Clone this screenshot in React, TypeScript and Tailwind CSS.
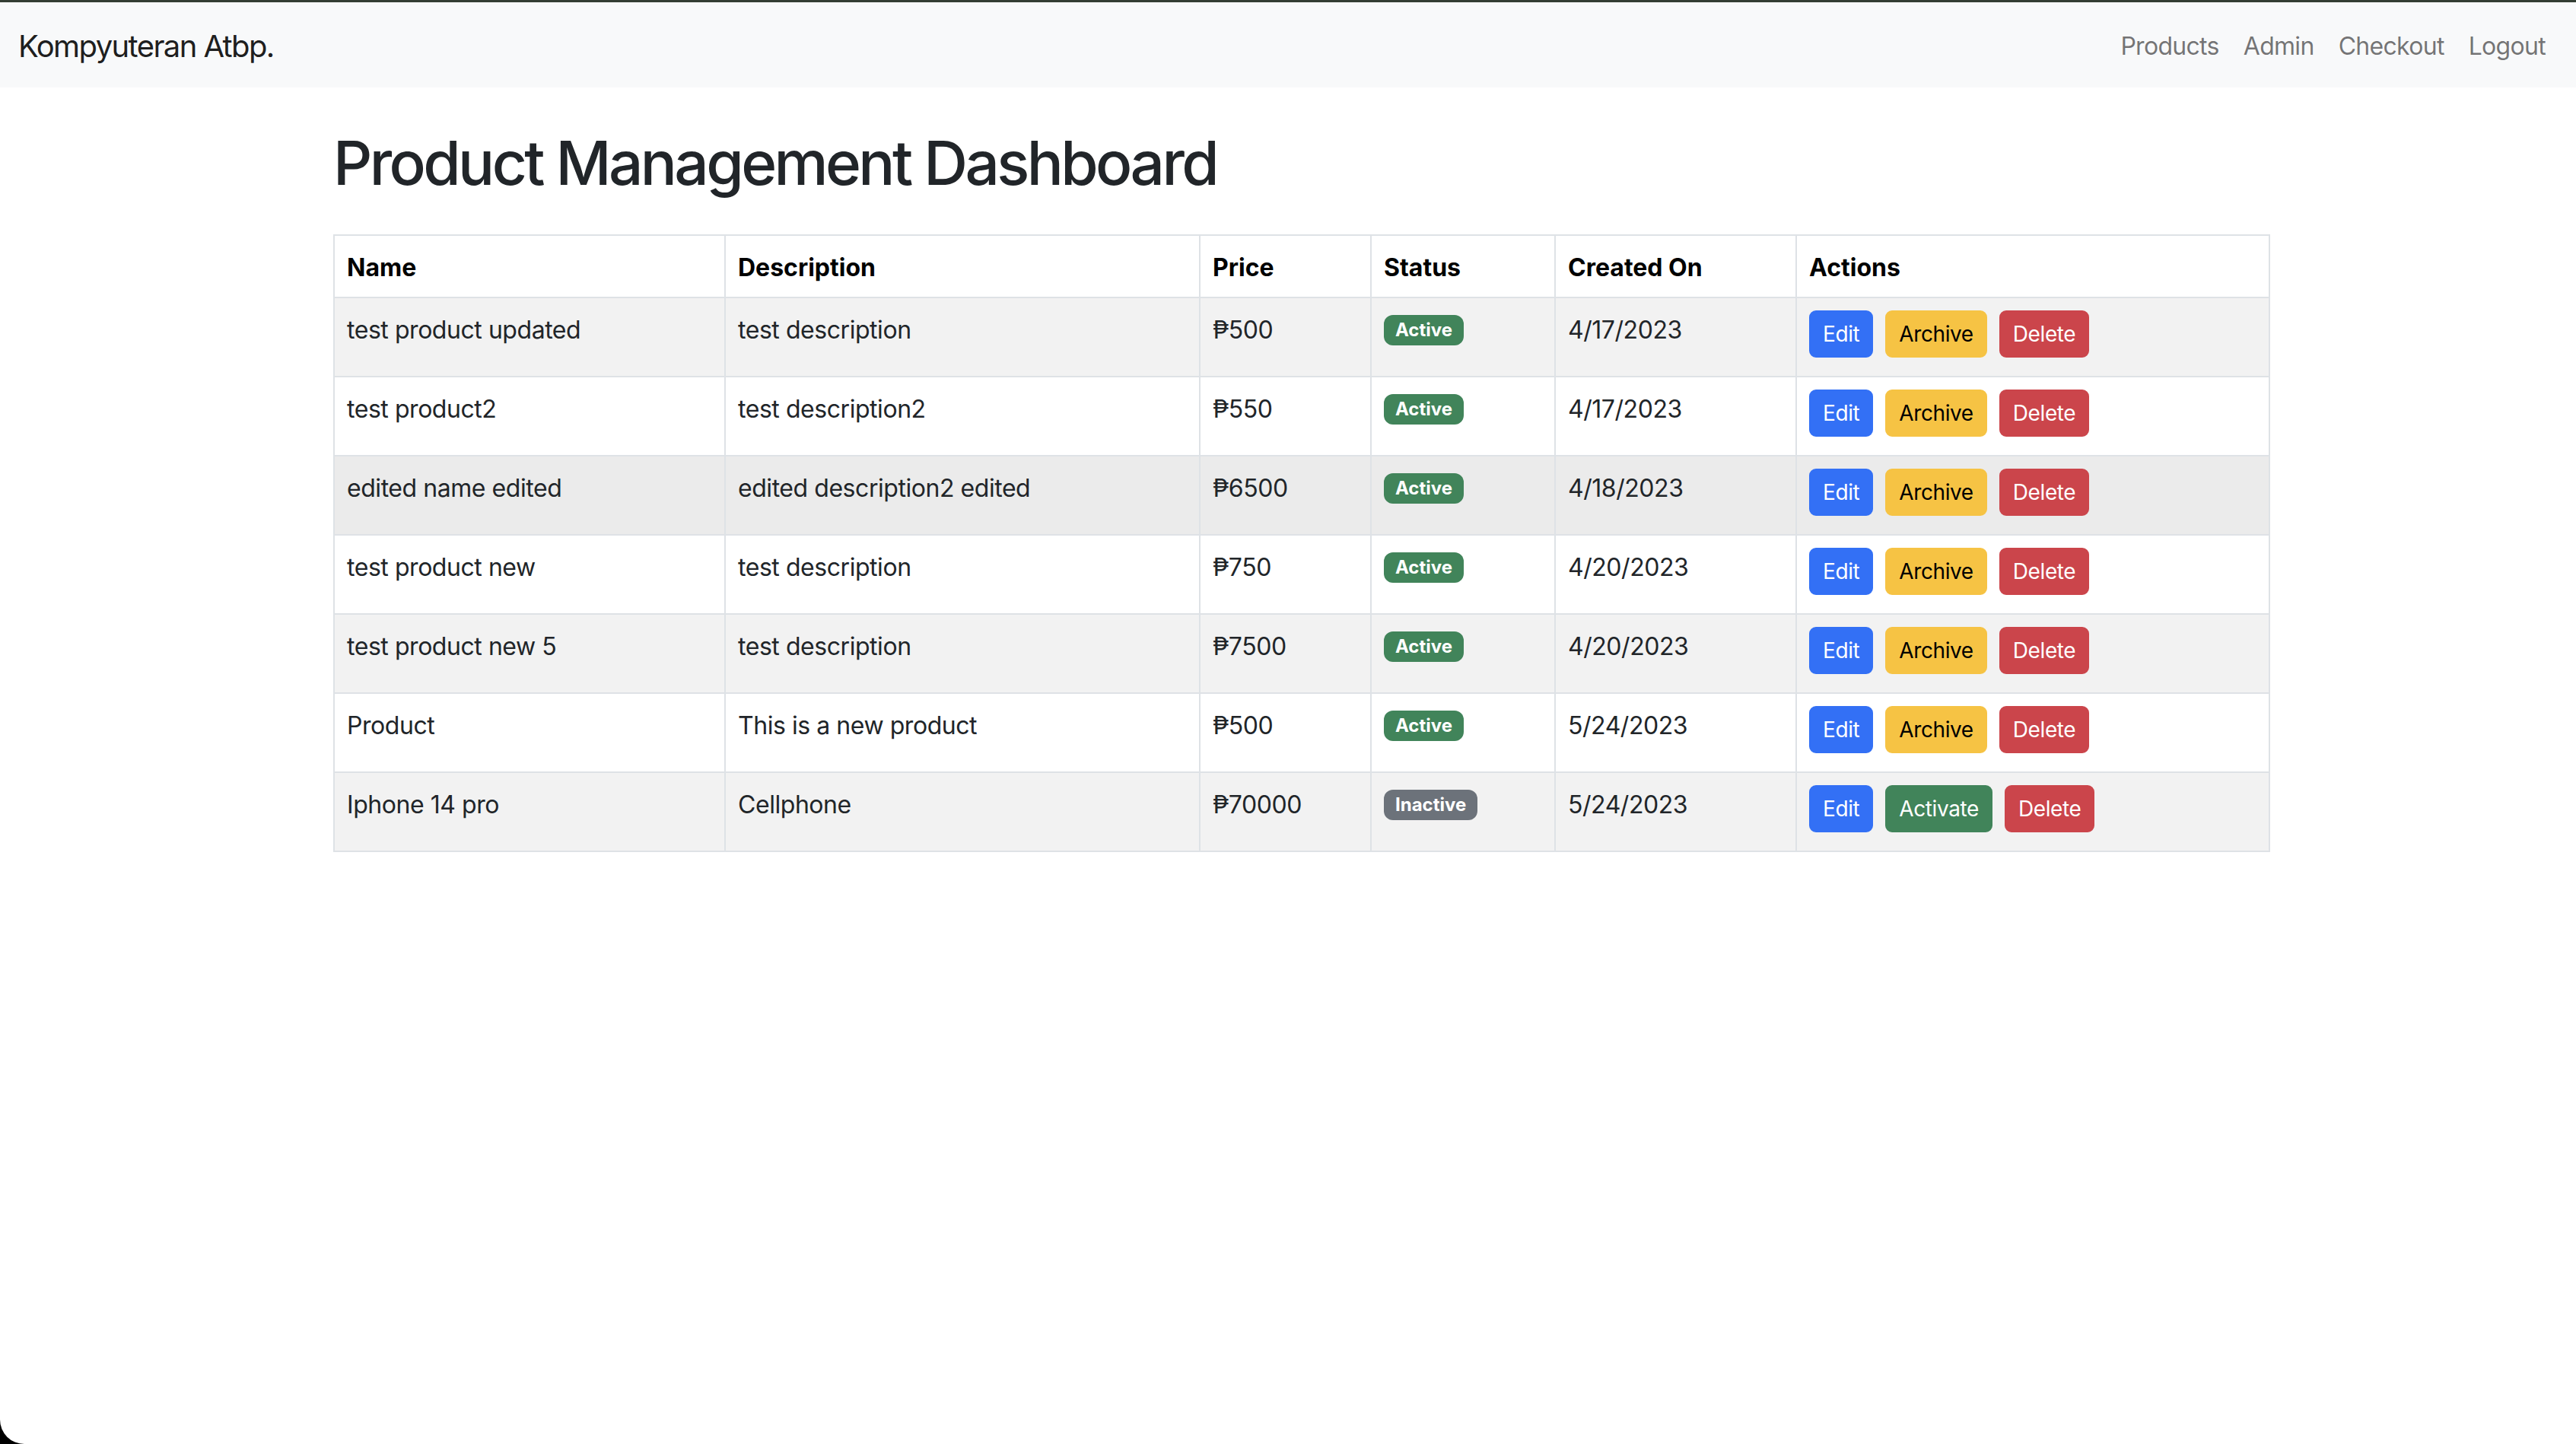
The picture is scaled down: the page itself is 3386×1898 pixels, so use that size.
import React from "react";

type Product = {
  name: string;
  description: string;
  price: string;
  active: boolean;
  created: string;
};

const products: Product[] = [
  { name: "test product updated", description: "test description", price: "₱500", active: true, created: "4/17/2023" },
  { name: "test product2", description: "test description2", price: "₱550", active: true, created: "4/17/2023" },
  { name: "edited name edited", description: "edited description2 edited", price: "₱6500", active: true, created: "4/18/2023" },
  { name: "test product new", description: "test description", price: "₱750", active: true, created: "4/20/2023" },
  { name: "test product new 5", description: "test description", price: "₱7500", active: true, created: "4/20/2023" },
  { name: "Product", description: "This is a new product", price: "₱500", active: true, created: "5/24/2023" },
  { name: "Iphone 14 pro", description: "Cellphone", price: "₱70000", active: false, created: "5/24/2023" },
];

const Btn = ({ label, className }: { label: string; className: string }) => (
  <button
    type="button"
    className={`h-[62px] px-[16px] border-2 rounded-[9px] text-[28px] leading-[42px] tracking-[-0.4px] ${className}`}
  >
    {label}
  </button>
);

const cell = "border-2 border-[#dee2e6] px-[16px] pt-[18px] pb-[14px] align-top";

export default function App() {
  return (
    <div
      className="relative w-[3386px] h-[1898px] bg-white overflow-hidden text-[#212529]"
      style={{ fontFamily: "Inter, 'Noto Sans', 'DejaVu Sans', sans-serif" }}
    >
      <div className="h-[3px] bg-[#333d33]" />

      <nav className="h-[112px] bg-[#f8f9fa] flex items-center justify-between px-[24px] pt-[4px]">
        <span className="text-[40px] leading-[60px] tracking-[-1.6px] text-black/90">Kompyuteran Atbp.</span>
        <div className="flex">
          {["Products", "Admin", "Checkout", "Logout"].map((l) => (
            <a key={l} href="#" className="px-[16px] text-[32px] leading-[48px] tracking-[-0.7px] text-black/55">
              {l}
            </a>
          ))}
        </div>
      </nav>

      <main className="ml-[438px] w-[2544px]">
        <h1 className="mt-[51px] text-[80px] leading-[96px] font-medium tracking-[-3.6px]">
          Product Management Dashboard
        </h1>

        <table className="mt-[46px] w-[2544px] border-collapse table-fixed text-[32px] leading-[48px]">
          <colgroup>
            <col className="w-[514px]" />
            <col className="w-[624px]" />
            <col className="w-[225px]" />
            <col className="w-[242px]" />
            <col className="w-[317px]" />
            <col className="w-[622px]" />
          </colgroup>
          <thead>
            <tr className="h-[82px]">
              {["Name", "Description", "Price", "Status", "Created On", "Actions"].map((h) => (
                <th key={h} className={`${cell} text-left font-bold text-black`}>
                  {h}
                </th>
              ))}
            </tr>
          </thead>
          <tbody className="tracking-[-0.45px]">
            {products.map((p, i) => (
              <tr
                key={i}
                className={`h-[104px] ${i === 2 ? "bg-[#ebebeb]" : i % 2 === 0 ? "bg-[#f2f2f2]" : "bg-white"}`}
              >
                <td className={cell}>{p.name}</td>
                <td className={cell}>{p.description}</td>
                <td className={cell}>{p.price}</td>
                <td className={cell}>
                  <div className="h-[48px] flex items-center">
                    <span
                      className={`px-[15px] py-[8px] rounded-[12px] text-[24px] leading-[24px] font-bold tracking-normal text-white ${
                        p.active ? "bg-[#41845a]" : "bg-[#6c727a]"
                      }`}
                    >
                      {p.active ? "Active" : "Inactive"}
                    </span>
                  </div>
                </td>
                <td className={cell}>{p.created}</td>
                <td className={`${cell} !pt-[16px]`}>
                  <div className="flex gap-[16px]">
                    <Btn label="Edit" className="bg-[#3370f5] border-[#3370f5] text-white" />
                    {p.active ? (
                      <Btn label="Archive" className="bg-[#f6c344] border-[#f6c344] text-black" />
                    ) : (
                      <Btn label="Activate" className="bg-[#41845a] border-[#41845a] text-white" />
                    )}
                    <Btn label="Delete" className="bg-[#cb454b] border-[#cb454b] text-white" />
                  </div>
                </td>
              </tr>
            ))}
          </tbody>
        </table>
      </main>

      <div className="absolute bottom-0 left-0 w-[32px] h-[32px] bg-black">
        <div className="w-full h-full bg-white rounded-bl-[32px]" />
      </div>
    </div>
  );
}
